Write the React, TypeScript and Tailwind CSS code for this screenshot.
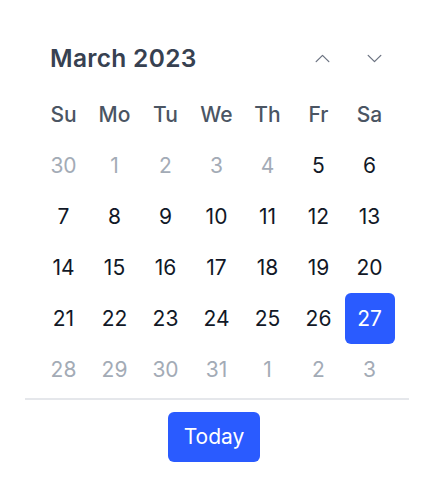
import React from "react";

const days: { d: number; muted?: boolean; sel?: boolean }[][] = [
  [{ d: 30, muted: true }, { d: 1, muted: true }, { d: 2, muted: true }, { d: 3, muted: true }, { d: 4, muted: true }, { d: 5 }, { d: 6 }],
  [{ d: 7 }, { d: 8 }, { d: 9 }, { d: 10 }, { d: 11 }, { d: 12 }, { d: 13 }],
  [{ d: 14 }, { d: 15 }, { d: 16 }, { d: 17 }, { d: 18 }, { d: 19 }, { d: 20 }],
  [{ d: 21 }, { d: 22 }, { d: 23 }, { d: 24 }, { d: 25 }, { d: 26 }, { d: 27, sel: true }],
  [{ d: 28, muted: true }, { d: 29, muted: true }, { d: 30, muted: true }, { d: 31, muted: true }, { d: 1, muted: true }, { d: 2, muted: true }, { d: 3, muted: true }],
];

const heads = ["Su", "Mo", "Tu", "We", "Th", "Fr", "Sa"];

export default function App() {
  return (
    <div className="w-[434px] h-[500px] bg-white" style={{ fontFamily: "Inter, 'Noto Sans', sans-serif" }}>
      <div className="ml-[25px] w-[384px] pt-[42px]">
        <div className="flex items-center h-[32px]">
          <div className="ml-[25px] text-[24.5px] font-semibold text-[#374151] tracking-[0.3px]">March 2023</div>
          <div className="ml-auto flex items-center mr-[25px] gap-[33px]">
            <svg width="19" height="19" viewBox="0 0 24 24" fill="none" stroke="#6b7280" strokeWidth="1.6" strokeLinecap="round" strokeLinejoin="round">
              <path d="M4 16 L12 8 L20 16" />
            </svg>
            <svg width="19" height="19" viewBox="0 0 24 24" fill="none" stroke="#6b7280" strokeWidth="1.6" strokeLinecap="round" strokeLinejoin="round">
              <path d="M4 8 L12 16 L20 8" />
            </svg>
          </div>
        </div>
        <div className="ml-[13px] mt-[15px] grid grid-cols-[repeat(7,51px)]">
          {heads.map((h) => (
            <div key={h} className="h-[51px] flex items-center justify-center text-[21px] font-medium text-[#4b5563]">
              {h}
            </div>
          ))}
          {days.flat().map((c, i) => (
            <div key={i} className="h-[51px] flex items-center justify-center">
              <div
                className={
                  c.sel
                    ? "w-[50px] h-[51px] rounded-[6px] bg-[#2a5bff] text-white flex items-center justify-center text-[21px]"
                    : c.muted
                    ? "w-[50px] h-[51px] flex items-center justify-center text-[21px] text-[#a3abb6]"
                    : "w-[50px] h-[51px] flex items-center justify-center text-[21px] text-[#111827]"
                }
              >
                {c.d}
              </div>
            </div>
          ))}
        </div>
        <div className="mt-[3px] h-[2px] bg-[#e5e7eb]" />
        <div className="flex justify-center mt-[12px] pr-[6px]">
          <button className="w-[92px] h-[50px] rounded-[6px] bg-[#2a5bff] text-white text-[21px]">Today</button>
        </div>
      </div>
    </div>
  );
}
